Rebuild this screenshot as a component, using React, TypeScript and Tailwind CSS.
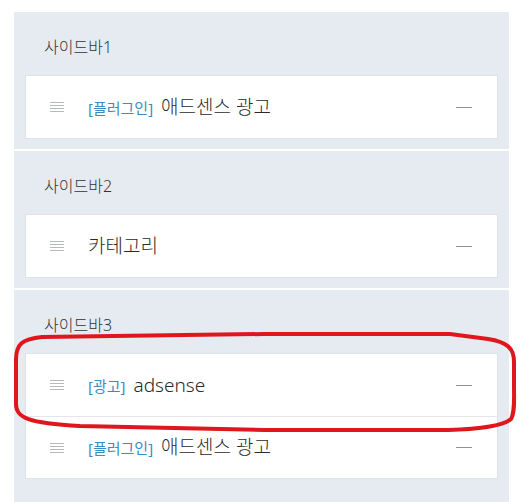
import React from "react";

const font = { fontFamily: '"Noto Sans", "Noto Sans CJK KR", sans-serif' };

function Burger() {
  return (
    <svg width="14" height="12" viewBox="0 0 14 12" className="shrink-0">
      <g stroke="#b5b9bd" strokeWidth="1">
        <line x1="0" y1="1.5" x2="14" y2="1.5" />
        <line x1="0" y1="4.5" x2="14" y2="4.5" />
        <line x1="0" y1="7.5" x2="14" y2="7.5" />
        <line x1="0" y1="10.5" x2="14" y2="10.5" />
      </g>
    </svg>
  );
}

function Item({ tag, label, first }: { tag?: string; label: string; first?: boolean }) {
  return (
    <div
      className={`flex h-[62px] items-center pl-[24px] pr-[25px] bg-white ${first ? "" : "border-t border-[#e2e6ea]"}`}
    >
      <Burger />
      <div className="ml-[24px] flex items-baseline flex-1">
        {tag && <span className="text-[15px] text-[#3a8cc1] mr-[8px]">{tag}</span>}
        <span className="text-[19px] text-[#2a2a2a] font-light">{label}</span>
      </div>
      <div className="w-[16px] h-px bg-[#8f9397]" />
    </div>
  );
}

function Panel({ title, children, grow }: { title: string; children: React.ReactNode; grow?: boolean }) {
  return (
    <div className={`bg-[#e6ebf1] px-[11px] pt-[25px] pb-[10px] ${grow ? "flex-1" : ""}`}>
      <div className="h-[20px] leading-[20px] text-[16px] text-[#333] pl-[19px] font-light">{title}</div>
      <div className="mt-[18px] border border-[#dde3e9]">{children}</div>
    </div>
  );
}

export default function App() {
  return (
    <div className="relative w-[528px] h-[502px] bg-white overflow-hidden" style={font}>
      <div className="ml-[14px] w-[495px] pt-[12px] flex flex-col gap-[2px] h-[502px]">
        <Panel title="사이드바1">
          <Item first tag="[플러그인]" label="애드센스 광고" />
        </Panel>
        <Panel title="사이드바2">
          <Item first label="카테고리" />
        </Panel>
        <Panel title="사이드바3" grow>
          <Item first tag="[광고]" label="adsense" />
          <Item tag="[플러그인]" label="애드센스 광고" />
        </Panel>
      </div>
      <svg className="absolute left-0 top-0 pointer-events-none" width="528" height="502" viewBox="0 0 528 502">
        <path
          d="M 42 337 C 22 339 16 344 16 360 L 16 404 C 16 418 28 423 80 426 L 264 430 L 448 430 C 482 429 503 426 511 419 C 515 412 514 400 514 385 L 514 362 C 514 348 507 342 488 339 L 450 334 L 264 334 Z"
          fill="none"
          stroke="#e0161f"
          strokeWidth="4"
          strokeLinejoin="round"
        />
      </svg>
    </div>
  );
}
